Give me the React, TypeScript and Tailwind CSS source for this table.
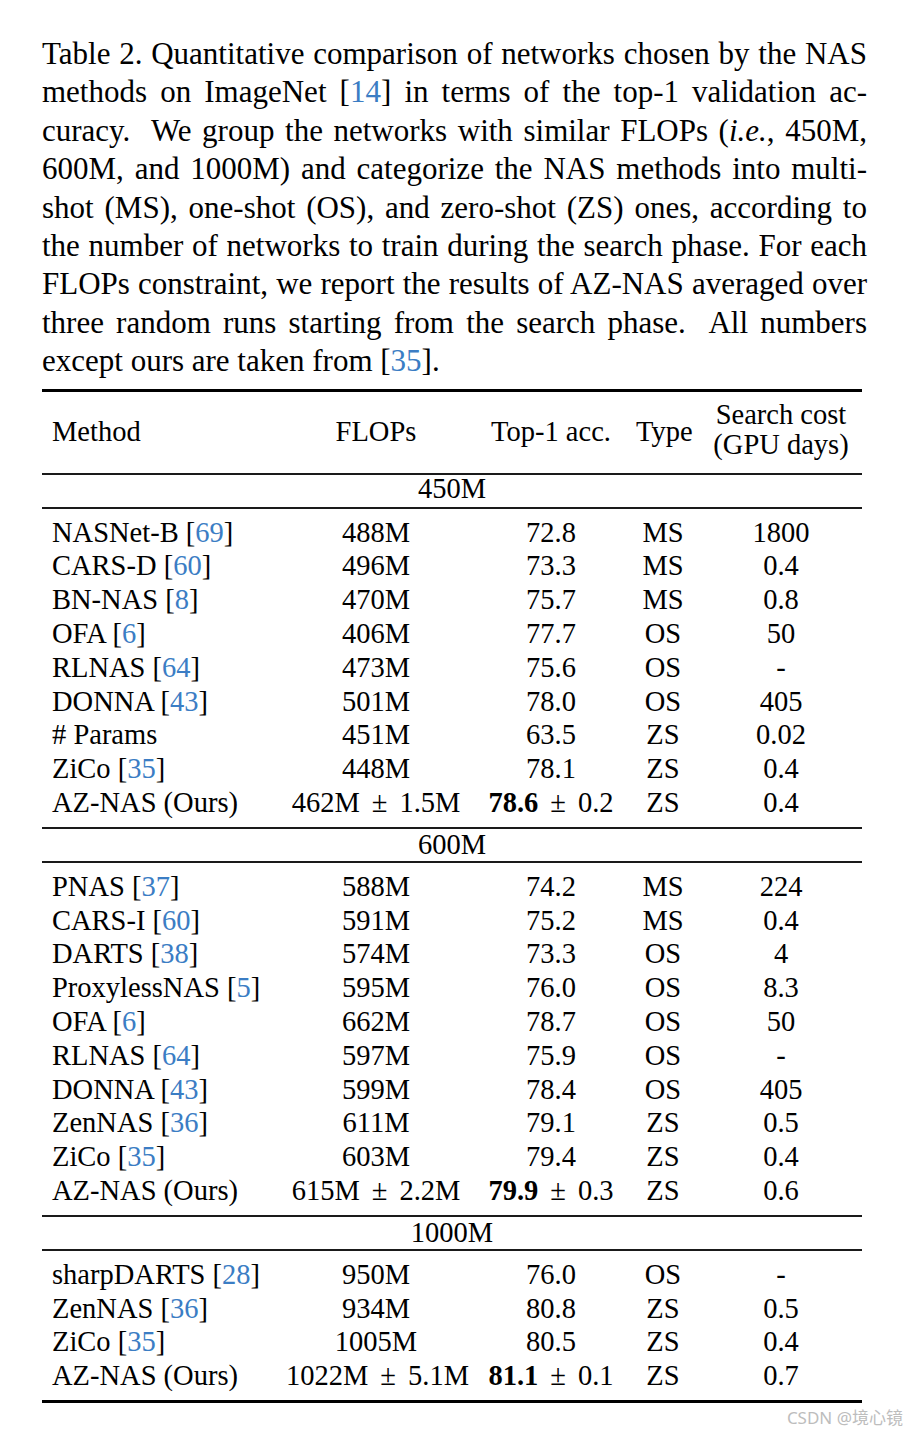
import React from 'react';

type Row = {
  name: string;
  cite?: string;
  flops: string;
  flopsStd?: string;
  acc: string;
  accStd?: string;
  type: string;
  cost: string;
};

type Group = { label: string; rows: Row[] };

// Table 2 data, grouped by FLOPs budget
const groups: Group[] = [
  {
    label: '450M',
    rows: [
      { name: 'NASNet-B', cite: '69', flops: '488M', acc: '72.8', type: 'MS', cost: '1800' },
      { name: 'CARS-D', cite: '60', flops: '496M', acc: '73.3', type: 'MS', cost: '0.4' },
      { name: 'BN-NAS', cite: '8', flops: '470M', acc: '75.7', type: 'MS', cost: '0.8' },
      { name: 'OFA', cite: '6', flops: '406M', acc: '77.7', type: 'OS', cost: '50' },
      { name: 'RLNAS', cite: '64', flops: '473M', acc: '75.6', type: 'OS', cost: '-' },
      { name: 'DONNA', cite: '43', flops: '501M', acc: '78.0', type: 'OS', cost: '405' },
      { name: '# Params', flops: '451M', acc: '63.5', type: 'ZS', cost: '0.02' },
      { name: 'ZiCo', cite: '35', flops: '448M', acc: '78.1', type: 'ZS', cost: '0.4' },
      { name: 'AZ-NAS (Ours)', flops: '462M', flopsStd: '1.5M', acc: '78.6', accStd: '0.2', type: 'ZS', cost: '0.4' },
    ],
  },
  {
    label: '600M',
    rows: [
      { name: 'PNAS', cite: '37', flops: '588M', acc: '74.2', type: 'MS', cost: '224' },
      { name: 'CARS-I', cite: '60', flops: '591M', acc: '75.2', type: 'MS', cost: '0.4' },
      { name: 'DARTS', cite: '38', flops: '574M', acc: '73.3', type: 'OS', cost: '4' },
      { name: 'ProxylessNAS', cite: '5', flops: '595M', acc: '76.0', type: 'OS', cost: '8.3' },
      { name: 'OFA', cite: '6', flops: '662M', acc: '78.7', type: 'OS', cost: '50' },
      { name: 'RLNAS', cite: '64', flops: '597M', acc: '75.9', type: 'OS', cost: '-' },
      { name: 'DONNA', cite: '43', flops: '599M', acc: '78.4', type: 'OS', cost: '405' },
      { name: 'ZenNAS', cite: '36', flops: '611M', acc: '79.1', type: 'ZS', cost: '0.5' },
      { name: 'ZiCo', cite: '35', flops: '603M', acc: '79.4', type: 'ZS', cost: '0.4' },
      { name: 'AZ-NAS (Ours)', flops: '615M', flopsStd: '2.2M', acc: '79.9', accStd: '0.3', type: 'ZS', cost: '0.6' },
    ],
  },
  {
    label: '1000M',
    rows: [
      { name: 'sharpDARTS', cite: '28', flops: '950M', acc: '76.0', type: 'OS', cost: '-' },
      { name: 'ZenNAS', cite: '36', flops: '934M', acc: '80.8', type: 'ZS', cost: '0.5' },
      { name: 'ZiCo', cite: '35', flops: '1005M', acc: '80.5', type: 'ZS', cost: '0.4' },
      { name: 'AZ-NAS (Ours)', flops: '1022M', flopsStd: '5.1M', acc: '81.1', accStd: '0.1', type: 'ZS', cost: '0.7' },
    ],
  },
];

function cn(...parts: (string | false | undefined)[]) {
  return parts.filter(Boolean).join(' ');
}

const Cite = ({ n }: { n: string }) => (
  <>
    [<span className="text-[#3b7dc4]">{n}</span>]
  </>
);

const Pm = () => <span className="mx-[12px]">±</span>;

const cols = 'grid grid-cols-[244px_180px_170px_54px_1fr]';

const ThinRule = () => <div className="h-[2px] bg-[#1a1a1a]" />;
const ThickRule = () => <div className="h-[3px] bg-black" />;

function TableRow({ row }: { row: Row }) {
  return (
    <div className={cn(cols, 'h-[33.8px] items-center leading-[33.8px]')}>
      <div className="pl-[10px] whitespace-nowrap">
        {row.name}
        {row.cite && (
          <>
            {' '}
            <Cite n={row.cite} />
          </>
        )}
      </div>
      <div className="text-center whitespace-nowrap">
        {row.flops}
        {row.flopsStd && (
          <>
            <Pm />
            {row.flopsStd}
          </>
        )}
      </div>
      <div className="text-center whitespace-nowrap">
        {row.accStd ? (
          <>
            <span className="font-bold">{row.acc}</span>
            <Pm />
            {row.accStd}
          </>
        ) : (
          row.acc
        )}
      </div>
      <div className="text-center">{row.type}</div>
      <div className="pl-[10px] text-center">{row.cost}</div>
    </div>
  );
}

const captionLines: React.ReactNode[] = [
  <>Table 2. Quantitative comparison of networks chosen by the NAS</>,
  <>
    methods on ImageNet <Cite n="14" /> in terms of the top-1 validation ac-
  </>,
  <>
    curacy.&nbsp; We group the networks with similar FLOPs (<i>i.e.</i>, 450M,
  </>,
  <>600M, and 1000M) and categorize the NAS methods into multi-</>,
  <>shot (MS), one-shot (OS), and zero-shot (ZS) ones, according to</>,
  <>the number of networks to train during the search phase. For each</>,
  <>FLOPs constraint, we report the results of AZ-NAS averaged over</>,
  <>three random runs starting from the search phase.&nbsp; All numbers</>,
];

export default function App() {
  return (
    <div className="w-[908px] h-[1433px] bg-white text-black font-['Liberation_Serif',serif]">
      {/* Caption */}
      <div className="pl-[42px] pt-[35px] w-[867px] text-[31px] leading-[38.4px]">
        {captionLines.map((line, i) => (
          <div key={i} className="text-justify [text-align-last:justify] whitespace-nowrap">
            {line}
          </div>
        ))}
        <div>
          except ours are taken from <Cite n="35" />.
        </div>
      </div>

      {/* Table */}
      <div className="ml-[42px] mt-[8px] w-[820px] text-[28.5px]">
        <ThickRule />
        <div className={cn(cols, 'h-[81px] items-center')}>
          <div className="pl-[10px]">Method</div>
          <div className="text-center">FLOPs</div>
          <div className="text-center">Top-1 acc.</div>
          <div className="text-center">Type</div>
          <div className="pl-[10px] pb-[4px] text-center leading-[30px] whitespace-nowrap">
            <div>Search cost</div>
            <div>(GPU days)</div>
          </div>
        </div>
        {groups.map((g, gi) => (
          <React.Fragment key={g.label}>
            <ThinRule />
            <div
              className={cn(
                'h-[32px] flex items-center justify-center leading-[32px]',
                gi === 0 && 'pb-[3px]'
              )}
            >
              {g.label}
            </div>
            <ThinRule />
            <div className="py-[7px]">
              {g.rows.map((r, i) => (
                <TableRow key={i} row={r} />
              ))}
            </div>
          </React.Fragment>
        ))}
        <ThickRule />
      </div>

      {/* Watermark */}
      <div className="mt-[5px] pr-[5px] flex justify-end text-[17px] leading-[20px] text-[#bdbdbd] font-['Noto_Sans','Noto_Sans_CJK_SC',sans-serif]">
        CSDN @境心镜
      </div>
    </div>
  );
}
